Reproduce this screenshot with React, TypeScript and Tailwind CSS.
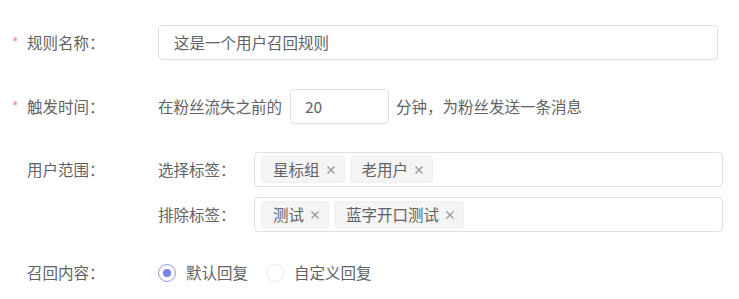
import React from 'react';

const Tag: React.FC<{ text: string }> = ({ text }) => (
  <span className="flex h-[27px] items-center gap-[6px] rounded-[3px] border border-[#ebeef5] bg-[#f4f4f5] pl-[11px] pr-[8px] text-[#606266]">
    <span>{text}</span>
    <svg className="h-[10px] w-[10px] text-[#909399]" viewBox="0 0 10 10" fill="none" stroke="currentColor" strokeWidth={1.2}>
      <path d="M1.5 1.5l7 7M8.5 1.5l-7 7" />
    </svg>
  </span>
);

const Label: React.FC<{ text: string; required?: boolean }> = ({ text, required }) => (
  <div className="flex h-[35px] w-[158px] shrink-0 items-center self-start pl-[12px]">
    <span className="w-[15px] text-[14px] text-[#f78989]">{required ? '*' : ''}</span>
    <span>{text}</span>
  </div>
);

const App: React.FC = () => {
  return (
    <div
      className="h-[299px] w-[739px] bg-white pt-[25px] text-[15.5px] text-[#606266]"
      style={{ fontFamily: '"Noto Sans CJK SC", "Noto Sans", sans-serif' }}
    >
      {/* 规则名称 */}
      <div className="flex h-[35px] items-center">
        <Label text="规则名称：" required />
        <div className="flex h-[35px] w-[560px] items-center rounded-[4px] border border-[#dcdfe6] px-[15px]">
          这是一个用户召回规则
        </div>
      </div>

      {/* 触发时间 */}
      <div className="mt-[29px] flex h-[35px] items-center">
        <Label text="触发时间：" required />
        <span>在粉丝流失之前的</span>
        <div className="ml-[8px] flex h-[35px] w-[99px] items-center rounded-[4px] border border-[#dcdfe6] px-[14px]">
          20
        </div>
        <span className="ml-[7px]">分钟，为粉丝发送一条消息</span>
      </div>

      {/* 用户范围 */}
      <div className="mt-[28px] flex">
        <Label text="用户范围：" />
        <div className="flex flex-col gap-[10px]">
          <div className="flex items-center">
            <span className="w-[96px]">选择标签：</span>
            <div className="flex h-[35px] w-[469px] items-center gap-[5px] rounded-[4px] border border-[#dcdfe6] px-[6px]">
              <Tag text="星标组" />
              <Tag text="老用户" />
            </div>
          </div>
          <div className="flex items-center">
            <span className="w-[96px]">排除标签：</span>
            <div className="flex h-[35px] w-[469px] items-center gap-[5px] rounded-[4px] border border-[#dcdfe6] px-[6px]">
              <Tag text="测试" />
              <Tag text="蓝字开口测试" />
            </div>
          </div>
        </div>
      </div>

      {/* 召回内容 */}
      <div className="mt-[23px] flex items-center">
        <Label text="召回内容：" />
        <label className="flex items-center">
          <span className="flex h-[18px] w-[18px] items-center justify-center rounded-full border border-[#8c9bf0] bg-white">
            <span className="h-[8px] w-[8px] rounded-full bg-[#7584ec]" />
          </span>
          <span className="ml-[10px]">默认回复</span>
        </label>
        <label className="ml-[18px] flex items-center">
          <span className="h-[18px] w-[18px] rounded-full border border-[#e4e7ed] bg-white" />
          <span className="ml-[10px]">自定义回复</span>
        </label>
      </div>
    </div>
  );
};

export default App;
